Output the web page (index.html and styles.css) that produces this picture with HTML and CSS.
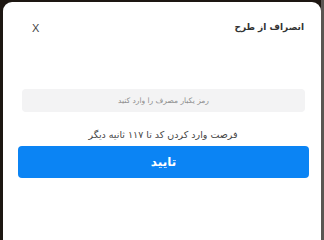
FILE: index.html
```html
<!DOCTYPE html>
<html lang="fa" dir="rtl">
<head>
<meta charset="utf-8">
<link rel="stylesheet" href="styles.css">
</head>
<body>
<div class="modal">
  <div class="header">
    <div class="title">انصراف از طرح</div>
    <div class="close">X</div>
  </div>
  <div class="otp">
    <div class="otp-field"><span class="otp-placeholder">رمز یکبار مصرف را وارد کنید</span></div>
  </div>
  <div class="timer">فرصت وارد کردن کد تا ۱۱۷ ثانیه دیگر</div>
  <button class="confirm">تایید</button>
</div>
</body>
</html>
```
FILE: styles.css
```css
html, body {
  margin: 0;
  padding: 0;
}
body {
  box-sizing: border-box;
  min-height: 100vh;
  padding: 2px 3px 0 3px;
  display: flex;
  flex-direction: column;
  background: linear-gradient(to left, #5a5652 0, #5a5652 3px, #1d1712 3px);
  font-family: "DejaVu Sans", "Noto Sans", sans-serif;
}
.modal {
  flex: 1;
  min-height: 220px;
  background: #ffffff;
  border-radius: 9px 9px 0 0;
  padding-top: 15px;
}
.header {
  display: flex;
  align-items: center;
  justify-content: space-between;
  height: 20px;
  padding: 0 17px 0 29px;
}
.title {
  font-size: 9px;
  font-weight: bold;
  color: #333333;
}
.close {
  font-family: "Liberation Sans", sans-serif;
  font-size: 11px;
  color: #444444;
  direction: ltr;
  margin-top: 2px;
}
.otp {
  margin: 52px 16px 0 19px;
}
.otp-field {
  display: flex;
  align-items: center;
  justify-content: center;
  height: 23px;
  border-radius: 4px;
  background: #f3f3f4;
}
.otp-placeholder {
  font-size: 7.5px;
  color: #8d8d8d;
}
.timer {
  margin-top: 17px;
  text-align: center;
  font-size: 9.5px;
  color: #444444;
  line-height: 12px;
  padding-left: 2px;
}
.confirm {
  display: block;
  box-sizing: border-box;
  width: calc(100% - 27px);
  margin: 5px 12px 0 15px;
  height: 32px;
  border: none;
  border-radius: 4px;
  background: #0b84f4;
  color: #ffffff;
  font-family: "DejaVu Sans", sans-serif;
  font-size: 12px;
  font-weight: bold;
}
```
